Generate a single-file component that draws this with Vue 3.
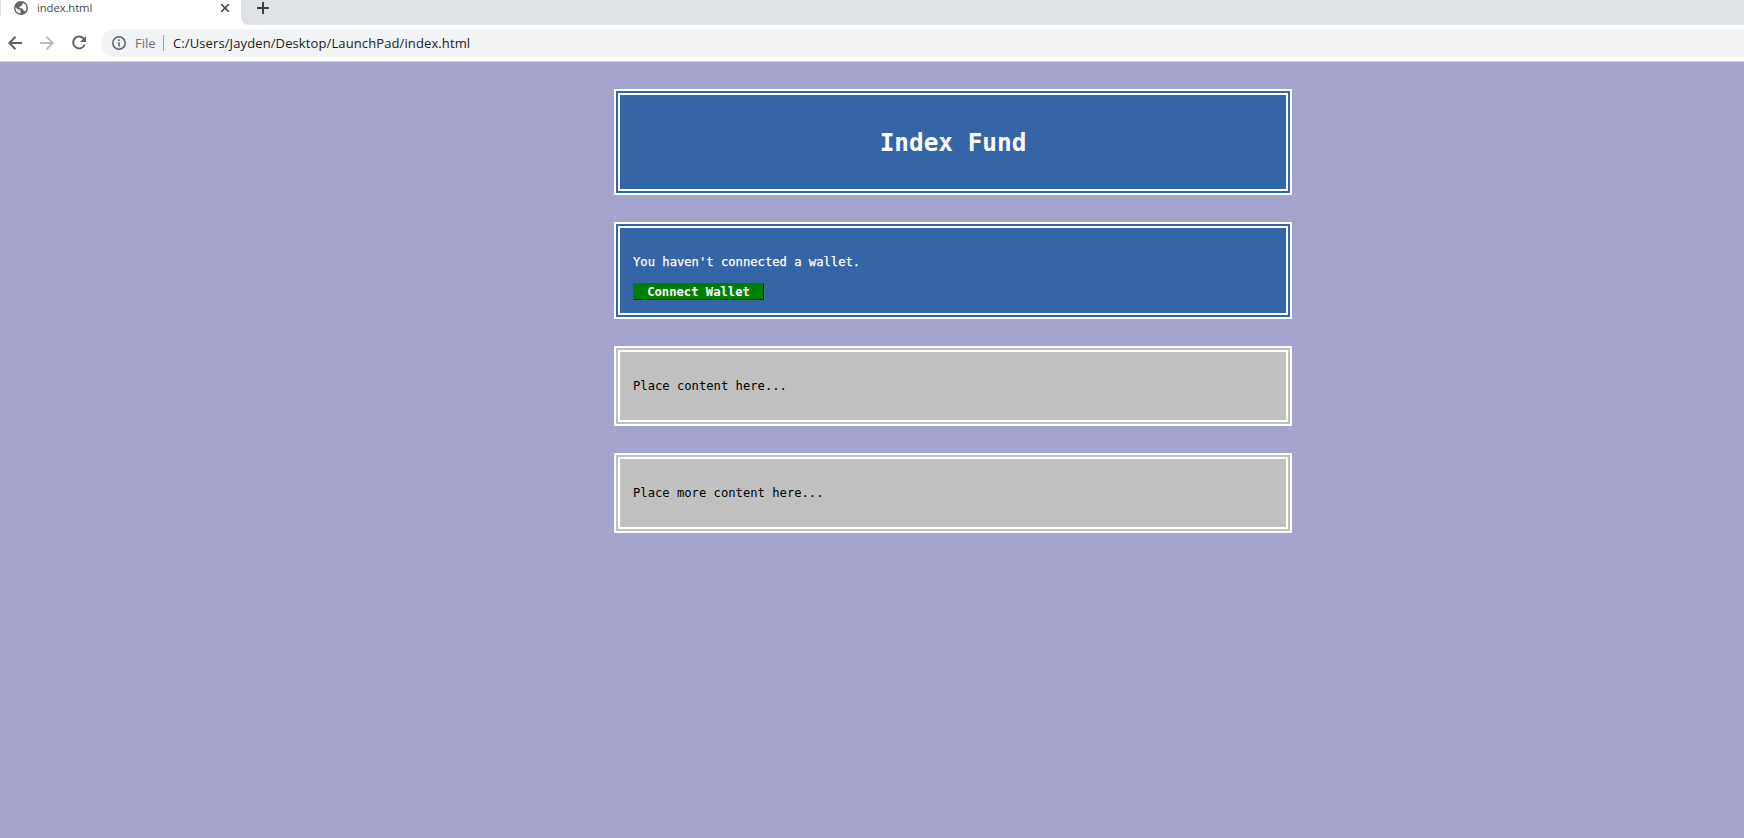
<script setup>
const panels = ['Place content here...', 'Place more content here...']
</script>

<template>
  <div class="window">
    <header class="tabstrip">
      <div class="tab">
        <svg class="globe" width="14" height="14" viewBox="0 0 14 14">
          <circle cx="7" cy="7" r="7" fill="#5f6368" />
          <path d="M1.5 6.2 L4 8.4 L6 8.7 L6.7 10 L6.3 12.5 C3.5 12.2 1.2 9.8 1.5 6.2Z M8.6 1.7 C11 2.4 12.6 4.6 12.5 7 C12.4 8.6 11.9 9.7 11.2 10.6 C10.8 9.9 10.2 9.6 9.5 9.7 L9 7.8 L5.5 7.1 L5.6 5.8 L7.4 5.3 L7.8 3.8 L9 3.1Z" fill="#fff" />
        </svg>
        <span class="tab-title">index.html</span>
        <svg class="close" width="10" height="10" viewBox="0 0 10 10">
          <path d="M1.2 1.2 L8.8 8.8 M8.8 1.2 L1.2 8.8" stroke="#3c4043" stroke-width="1.6" />
        </svg>
      </div>
      <div class="strip-rest">
        <svg class="plus" width="12" height="12" viewBox="0 0 12 12">
          <path d="M6 0 V12 M0 6 H12" stroke="#3c4043" stroke-width="2" />
        </svg>
      </div>
    </header>
    <nav class="toolbar">
      <svg class="nav-icon" width="16" height="16" viewBox="0 0 16 16">
        <path d="M15 8 H2.5 M8.5 1.8 L2.3 8 L8.5 14.2" fill="none" stroke="#5f6368" stroke-width="2" />
      </svg>
      <svg class="nav-icon" width="16" height="16" viewBox="0 0 16 16">
        <path d="M1 8 H13.5 M7.5 1.8 L13.7 8 L7.5 14.2" fill="none" stroke="#babcbe" stroke-width="2" />
      </svg>
      <svg class="nav-icon" width="16" height="16" viewBox="0 0 16 16">
        <path d="M13.2 4.2 A6 6 0 1 0 13.8 9.5" fill="none" stroke="#5f6368" stroke-width="2" />
        <path d="M15 1 V7 H9Z" fill="#5f6368" />
      </svg>
      <div class="omnibox">
        <svg width="14" height="14" viewBox="0 0 14 14">
          <circle cx="7" cy="7" r="6.2" fill="none" stroke="#5f6368" stroke-width="1.5" />
          <path d="M7 6.2 V10.4 M7 3.4 V5" stroke="#5f6368" stroke-width="1.6" />
        </svg>
        <span class="scheme">File</span>
        <span class="separator"></span>
        <span class="url">C:/Users/Jayden/Desktop/LaunchPad/index.html</span>
      </div>
    </nav>
    <main class="page">
      <section class="box title"><h1>Index Fund</h1></section>
      <section class="box wallet">
        <p>You haven't connected a wallet.</p>
        <button>Connect Wallet</button>
      </section>
      <section v-for="text in panels" :key="text" class="box panel"><p>{{ text }}</p></section>
    </main>
  </div>
</template>

<style>
body { margin: 0; overflow: hidden; }
</style>

<style scoped>
.window { height: 838px; overflow: hidden; display: flex; flex-direction: column; background: #fff; font-family: "Open Sans", "Noto Sans", sans-serif; }
.tabstrip { flex: none; height: 25px; display: flex; background: #fff; }
.tab { width: 241px; height: 16px; box-sizing: border-box; padding-left: 13px; border-left: 1px solid #dee1e6; display: flex; align-items: center; }
.globe { flex: none; }
.tab-title { margin-left: 9px; width: 184px; font-size: 11.3px; line-height: 16px; color: #45494d; letter-spacing: -0.1px; }
.close { flex: none; margin-left: -1px; }
.strip-rest { flex: 1; background: #dee1e6; border-bottom-left-radius: 8px; padding: 2px 0 0 16px; }
.plus { display: block; }
.toolbar { flex: none; height: 36px; display: flex; align-items: center; padding-left: 7px; border-bottom: 1px solid #d5d6dc; }
.nav-icon { margin-right: 16px; flex: none; }
.omnibox { flex: 1; height: 28px; margin-left: -2px; padding-left: 11px; background: #f1f3f4; border-radius: 14px 0 0 14px; display: flex; align-items: center; font-size: 13px; line-height: 20px; }
.scheme { margin-left: 9px; width: 28px; color: #6c7074; }
.separator { width: 1px; height: 16px; background: #9aa0a6; }
.url { margin-left: 9px; color: #202124; white-space: nowrap; letter-spacing: 0.11px; }
.page { flex: 1; min-height: 0; background: #a5a4ce; padding-top: 27px; padding-left: 614px; display: flex; flex-direction: column; gap: 27px; font-family: "DejaVu Sans Mono", monospace; font-size: 12.18px; }
.box { flex: none; width: 678px; box-sizing: border-box; border: 6px double #fff; padding: 0 13px; }
.title { height: 106px; background: #3465a6; color: #fff; display: flex; align-items: center; justify-content: center; }
h1 { margin: 2px 0 0; font-size: 24.36px; line-height: 32px; }
p { margin: 0; line-height: 16px; }
.wallet { height: 97px; background: #3465a6; color: #fff; padding-top: 26px; }
.wallet p { -webkit-text-stroke: 0.25px #fff; }
button { display: block; width: 131px; height: 17px; margin-top: 13px; padding: 0; border: 1px solid; border-color: #008000 #003300 #003300 #008000; background: #008000; color: #fff; font: bold 12.18px/14px "DejaVu Sans Mono", monospace; }
.panel { height: 80px; background: #c0c0c0; color: #000; padding-top: 26px; }
</style>
